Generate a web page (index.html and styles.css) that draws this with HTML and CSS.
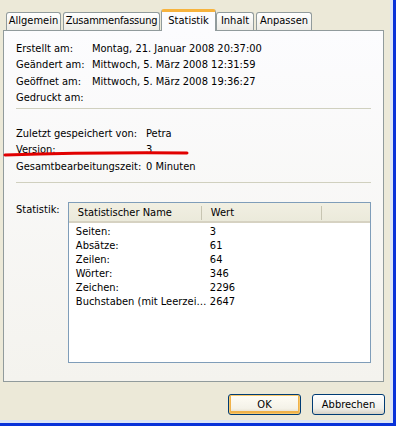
FILE: index.html
```html
<!DOCTYPE html>
<html lang="de">
<head>
  <meta charset="UTF-8">
  <title>Eigenschaften</title>
  <link rel="stylesheet" href="styles.css">
</head>
<body>
  <div class="window">
    <div class="tabs">
      <div class="tab t-allg">Allgemein</div>
      <div class="tab t-zus">Zusammenfassung</div>
      <div class="tab t-stat active">Statistik</div>
      <div class="tab t-inh">Inhalt</div>
      <div class="tab t-anp">Anpassen</div>
    </div>
    <div class="panel">
      <div class="fields dates">
        <span>Erstellt am:</span><span>Montag, 21. Januar 2008 20:37:00</span>
        <span>Geändert am:</span><span>Mittwoch, 5. März 2008 12:31:59</span>
        <span>Geöffnet am:</span><span>Mittwoch, 5. März 2008 19:36:27</span>
        <span>Gedruckt am:</span><span></span>
      </div>
      <div class="sep"></div>
      <div class="fields saved">
        <span>Zuletzt gespeichert von:</span><span>Petra</span>
        <span>Version:</span><span>3</span>
        <span>Gesamtbearbeitungszeit:</span><span>0 Minuten</span>
      </div>
      <div class="sep"></div>
      <div class="stats">
        <span class="stats-label">Statistik:</span>
        <div class="listview">
          <div class="lv-head">
            <div class="col name">Statistischer Name</div>
            <div class="col value">Wert</div>
            <div class="col rest"></div>
          </div>
          <div class="lv-rows">
            <div class="lv-row"><span>Seiten:</span><span>3</span></div>
            <div class="lv-row"><span>Absätze:</span><span>61</span></div>
            <div class="lv-row"><span>Zeilen:</span><span>64</span></div>
            <div class="lv-row"><span>Wörter:</span><span>346</span></div>
            <div class="lv-row"><span>Zeichen:</span><span>2296</span></div>
            <div class="lv-row"><span>Buchstaben (mit Leerzei…</span><span>2647</span></div>
          </div>
        </div>
      </div>
    </div>
    <div class="buttons">
      <button class="btn default">OK</button>
      <button class="btn">Abbrechen</button>
    </div>
    <!-- annotation stroke drawn over the dialog -->
    <svg class="mark" width="190" height="8" viewBox="0 0 190 8">
      <path d="M2 5 Q90 2.2 184 3" stroke="#e10000" stroke-width="3" fill="none" stroke-linecap="round"/>
    </svg>
  </div>
</body>
</html>
```

FILE: styles.css
```css
html, body {
  margin: 0;
  padding: 0;
}
body {
  width: 396px;
  height: 426px;
  overflow: hidden;
  background: #ece9d8;
  font-family: "DejaVu Sans Condensed", "DejaVu Sans", sans-serif;
  font-size: 11px;
  color: #000;
}

.window {
  position: relative;
  box-sizing: border-box;
  width: 396px;
  height: 426px;
  padding: 9px 0 0 3px;
  border-right: 3px solid #0831d9;
  border-bottom: 3px solid #0831d9;
  box-shadow: inset -3px -3px 0 #dbe3f5;
}

.tabs {
  display: flex;
  align-items: flex-end;
  padding-left: 3px;
  height: 21px;
  position: relative;
  z-index: 2;
}
.tab {
  box-sizing: border-box;
  height: 18px;
  line-height: 16px;
  padding: 0;
  text-align: center;
  white-space: nowrap;
  overflow: hidden;
  margin-right: 2px;
  border: 1px solid #919b9c;
  border-bottom: none;
  border-radius: 3px 3px 0 0;
  background: linear-gradient(#ffffff, #ecebe5);
}
.t-allg { width: 55px; }
.t-zus { width: 97px; letter-spacing: -0.2px; }
.t-stat { width: 55px; }
.t-inh { width: 38px; }
.t-anp { width: 56px; }
.tab.active {
  height: 22px;
  line-height: 18px;
  margin: 0 0 -1px -1px;
  border-top: 3px solid #f7b33d;
  background: #fcfcfe;
}

.panel {
  box-sizing: border-box;
  width: 381px;
  height: 352px;
  border: 1px solid #919b9c;
  background: linear-gradient(#fcfcfe, #f4f3ee);
  padding: 10px 12px 0 12px;
}

.fields {
  display: grid;
  line-height: 16.3px;
}
.dates {
  grid-template-columns: 76px 1fr;
}
.saved {
  grid-template-columns: 130px 1fr;
}

.sep {
  height: 1px;
  background: #d0d0bf;
  margin: 2px 0 17px 0;
}
.saved + .sep {
  margin: 7px 0 19px 0;
}

.stats {
  display: flex;
}
.stats-label {
  width: 52px;
  line-height: 16px;
}
.listview {
  box-sizing: border-box;
  width: 304px;
  height: 161px;
  border: 1px solid #7f9db9;
  background: #fff;
}
.lv-head {
  display: flex;
  height: 20px;
  background: linear-gradient(#f1efe2, #ebeadb);
  border-bottom: 2px solid #d6d2c2;
  box-sizing: border-box;
}
.col {
  box-sizing: border-box;
  padding-left: 9px;
  border-right: 1px solid #c7c5b2;
  margin: 3px 0 1px;
  line-height: 14px;
}
.col.name { width: 133px; }
.col.value { width: 120px; }
.col.rest { flex: 1; border-right: none; }

.lv-rows {
  padding-top: 2px;
}
.lv-row {
  display: flex;
  height: 14px;
  line-height: 14px;
  padding-left: 7px;
}
.lv-row span:first-child {
  width: 134px;
}

.buttons {
  display: flex;
  justify-content: flex-end;
  gap: 11px;
  padding: 12px 8px 0 0;
}
.btn {
  box-sizing: border-box;
  width: 73px;
  height: 21px;
  font: inherit;
  color: #000;
  border: 1px solid #003c74;
  border-radius: 3px;
  background: linear-gradient(#ffffff, #f0f0ea 70%, #d6d0c5);
  padding: 0;
}
.btn.default {
  box-shadow: inset 0 0 0 1px #f9c86b, inset 0 -1px 0 2px #f0b24a;
  background: linear-gradient(#fffdf5, #f4f2e8 70%, #e0d8c4);
}

.mark {
  position: absolute;
  left: 3px;
  top: 150px;
}
```
